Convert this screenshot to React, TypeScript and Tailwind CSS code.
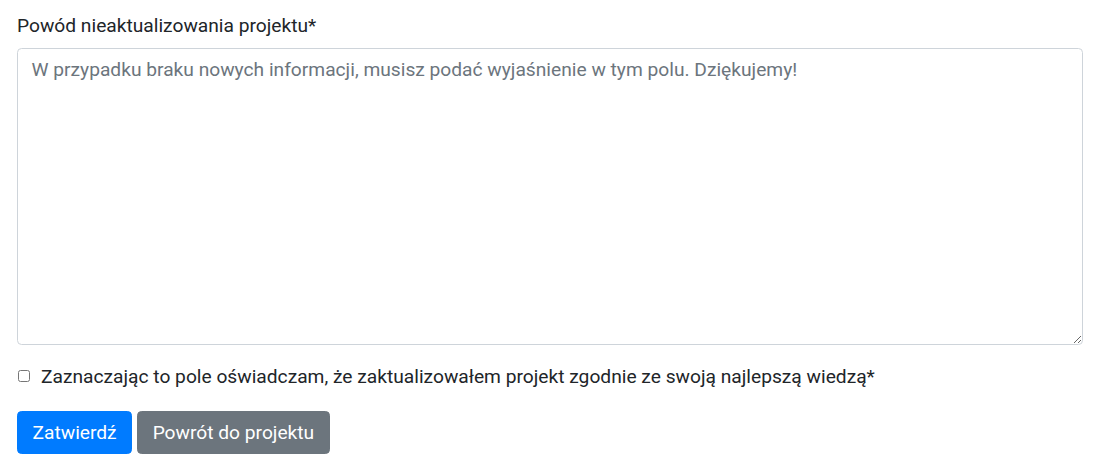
import { useState } from 'react'

export default function App() {
  const [reason, setReason] = useState('')
  const [confirmed, setConfirmed] = useState(false)

  return (
    <div
      className="min-h-screen bg-white pl-[17px] pr-[18px] pt-[12px] text-[19.2px] leading-[27px] text-[#212529]"
      style={{ fontFamily: 'Roboto, "Liberation Sans", "Noto Sans", sans-serif' }}
    >
      <form onSubmit={(e) => e.preventDefault()}>
        <div className="mb-[18px]">
          <label htmlFor="reason" className="mb-[9px] block">
            Powód nieaktualizowania projektu*
          </label>
          <textarea
            id="reason"
            value={reason}
            onChange={(e) => setReason(e.target.value)}
            placeholder="W przypadku braku nowych informacji, musisz podać wyjaśnienie w tym polu. Dziękujemy!"
            className="block h-[297px] w-full rounded-[4.5px] border border-[#ced4da] px-[13.5px] py-[6.75px] text-[19.2px] leading-[27px] text-[#495057] outline-none placeholder:text-[#6c757d]"
          />
        </div>

        <div className="flex items-start">
          <input
            id="confirm"
            type="checkbox"
            checked={confirmed}
            onChange={(e) => setConfirmed(e.target.checked)}
            className="ml-px mt-[7px] h-[12px] w-[12px] shrink-0"
          />
          <label htmlFor="confirm" className="pl-[11px]">
            Zaznaczając to pole oświadczam, że zaktualizowałem projekt zgodnie ze swoją najlepszą wiedzą*
          </label>
        </div>

        <div className="mt-[21px] flex gap-[5px]">
          <button
            type="submit"
            className="h-[43px] rounded-[4.5px] border border-[#007bff] bg-[#007bff] px-[14.5px] text-[19.2px] leading-[27px] text-white"
          >
            Zatwierdź
          </button>
          <button
            type="button"
            className="h-[43px] rounded-[4.5px] border border-[#6c757d] bg-[#6c757d] px-[14.5px] text-[19.2px] leading-[27px] text-white"
          >
            Powrót do projektu
          </button>
        </div>
      </form>
    </div>
  )
}
